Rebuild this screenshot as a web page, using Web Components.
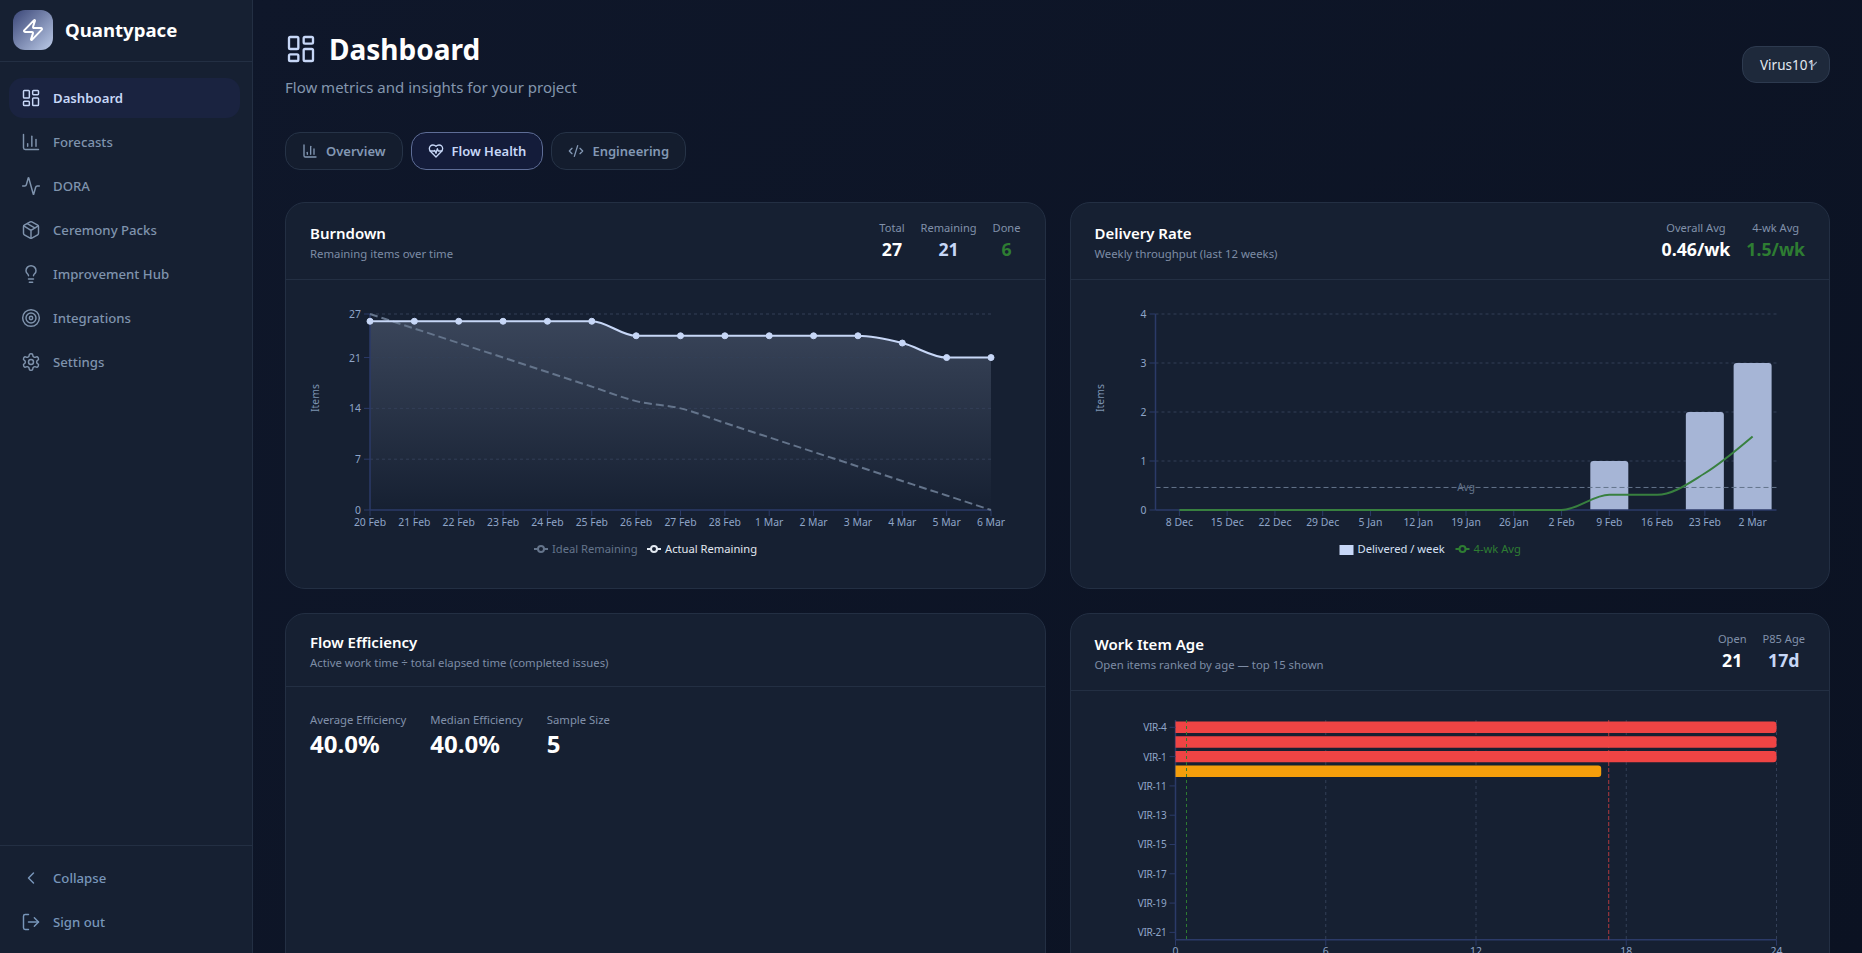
<!DOCTYPE html>
<html lang="en">
<head>
<meta charset="utf-8">
<title>Quantypace</title>
<style>
  html, body { margin: 0; height: 100%; background: #0e1628; }
  body { font-family: "Noto Sans", Inter, "Liberation Sans", sans-serif; overflow: hidden; }
</style>
</head>
<body>
<qp-app></qp-app>
<script>
const ICONS = {
  dashboard: '<rect x="3" y="3" width="7" height="9" rx="1"/><rect x="14" y="3" width="7" height="5" rx="1"/><rect x="14" y="12" width="7" height="9" rx="1"/><rect x="3" y="16" width="7" height="5" rx="1"/>',
  chart: '<path d="M3 3v16a2 2 0 0 0 2 2h16"/><path d="M18 17V9"/><path d="M13 17V5"/><path d="M8 17v-3"/>',
  activity: '<path d="M22 12h-2.48a2 2 0 0 0-1.93 1.46l-2.35 8.36a.25.25 0 0 1-.48 0L9.24 2.18a.25.25 0 0 0-.48 0l-2.35 8.36A2 2 0 0 1 4.49 12H2"/>',
  package: '<path d="M11 21.73a2 2 0 0 0 2 0l7-4A2 2 0 0 0 21 16V8a2 2 0 0 0-1-1.73l-7-4a2 2 0 0 0-2 0l-7 4A2 2 0 0 0 3 8v8a2 2 0 0 0 1 1.73z"/><path d="M12 22V12"/><path d="m3.3 7 7.703 4.734a2 2 0 0 0 1.994 0L20.7 7"/><path d="m7.5 4.27 9 5.15"/>',
  bulb: '<path d="M15 14c.2-1 .7-1.7 1.5-2.5 1-.9 1.5-2.2 1.5-3.5A6 6 0 0 0 6 8c0 1 .2 2.2 1.5 3.5.7.7 1.3 1.5 1.5 2.5"/><path d="M9 18h6"/><path d="M10 22h4"/>',
  target: '<circle cx="12" cy="12" r="10"/><circle cx="12" cy="12" r="6"/><circle cx="12" cy="12" r="2"/>',
  settings: '<path d="M12.22 2h-.44a2 2 0 0 0-2 2v.18a2 2 0 0 1-1 1.73l-.43.25a2 2 0 0 1-2 0l-.15-.08a2 2 0 0 0-2.73.73l-.22.38a2 2 0 0 0 .73 2.73l.15.1a2 2 0 0 1 1 1.72v.51a2 2 0 0 1-1 1.74l-.15.09a2 2 0 0 0-.73 2.73l.22.38a2 2 0 0 0 2.73.73l.15-.08a2 2 0 0 1 2 0l.43.25a2 2 0 0 1 1 1.73V20a2 2 0 0 0 2 2h.44a2 2 0 0 0 2-2v-.18a2 2 0 0 1 1-1.73l.43-.25a2 2 0 0 1 2 0l.15.08a2 2 0 0 0 2.73-.73l.22-.39a2 2 0 0 0-.73-2.73l-.15-.08a2 2 0 0 1-1-1.74v-.5a2 2 0 0 1 1-1.74l.15-.09a2 2 0 0 0 .73-2.73l-.22-.38a2 2 0 0 0-2.73-.73l-.15.08a2 2 0 0 1-2 0l-.43-.25a2 2 0 0 1-1-1.73V4a2 2 0 0 0-2-2z"/><circle cx="12" cy="12" r="3"/>',
  zap: '<path d="M4 14a1 1 0 0 1-.78-1.63l9.9-10.2a.5.5 0 0 1 .86.46l-1.92 6.02A1 1 0 0 0 13 10h7a1 1 0 0 1 .78 1.63l-9.9 10.2a.5.5 0 0 1-.86-.46l1.92-6.02A1 1 0 0 0 11 14z"/>',
  left: '<path d="m15 18-6-6 6-6"/>',
  logout: '<path d="m16 17 5-5-5-5"/><path d="M21 12H9"/><path d="M9 21H5a2 2 0 0 1-2-2V5a2 2 0 0 1 2-2h4"/>',
  heart: '<path d="M19 14c1.49-1.46 3-3.21 3-5.5A5.5 5.5 0 0 0 16.5 3c-1.76 0-3 .5-4.5 2-1.5-1.5-2.74-2-4.5-2A5.5 5.5 0 0 0 2 8.5c0 2.3 1.5 4.05 3 5.5l7 7Z"/><path d="M3.22 12H9.5l.5-1 2 4.5 2-7 1.5 3.5h5.27"/>',
  code: '<path d="m18 16 4-4-4-4"/><path d="m6 8-4 4 4 4"/><path d="m14.5 4-5 16"/>',
  down: '<path d="m6 9 6 6 6-6"/>'
};

function iconSvg(name, size, sw) {
  return `<svg xmlns="http://www.w3.org/2000/svg" width="${size}" height="${size}" viewBox="0 0 24 24" fill="none" stroke="currentColor" stroke-width="${sw || 2}" stroke-linecap="round" stroke-linejoin="round" style="display:block;flex:none">${ICONS[name]}</svg>`;
}

// same curve as d3 curveMonotoneX
function monotonePath(pts) {
  const n = pts.length, t = new Array(n).fill(0);
  const sign = v => (v < 0 ? -1 : 1);
  for (let i = 1; i < n - 1; i++) {
    const h0 = pts[i][0] - pts[i - 1][0], h1 = pts[i + 1][0] - pts[i][0];
    const s0 = (pts[i][1] - pts[i - 1][1]) / h0, s1 = (pts[i + 1][1] - pts[i][1]) / h1;
    const p = (s0 * h1 + s1 * h0) / (h0 + h1);
    t[i] = (sign(s0) + sign(s1)) * Math.min(Math.abs(s0), Math.abs(s1), 0.5 * Math.abs(p)) || 0;
  }
  const h = pts[1][0] - pts[0][0];
  t[0] = (3 * (pts[1][1] - pts[0][1]) / h - t[1]) / 2;
  t[n - 1] = (3 * (pts[n - 1][1] - pts[n - 2][1]) / h - t[n - 2]) / 2;
  let d = `M${pts[0][0]},${pts[0][1]}`;
  for (let i = 0; i < n - 1; i++) {
    const dx = (pts[i + 1][0] - pts[i][0]) / 3;
    d += `C${pts[i][0] + dx},${pts[i][1] + dx * t[i]} ${pts[i + 1][0] - dx},${pts[i + 1][1] - dx * t[i + 1]} ${pts[i + 1][0]},${pts[i + 1][1]}`;
  }
  return d;
}

const AXIS = '#2b3a68', GRID = '#333f57', TICK = '#8fa5c8';
const chartStyle = `
  :host { display: block; }
  svg.plot { display: block; width: 100%; height: 260px; overflow: visible; }
  text { font-family: "Noto Sans", Inter, "Liberation Sans", sans-serif; font-size: 10.4px; fill: ${TICK}; }
  .legend { font-size: 11.2px; }
  .name { font-size: 10px; letter-spacing: -.25px; }
`;

function yTicks(list, x0, x1, fn) {
  return list.map(v => {
    const y = fn(v);
    return `<line x1="${x0 - 6}" x2="${x0}" y1="${y}" y2="${y}" stroke="${AXIS}"/>
      <text x="${x0 - 9}" y="${y + 4}" text-anchor="end">${v}</text>`;
  }).join('');
}
function legendIcon(x, y, color) {
  return `<line x1="${x}" x2="${x + 14}" y1="${y}" y2="${y}" stroke="${color}" stroke-width="2"/>
    <circle cx="${x + 7}" cy="${y}" r="3" fill="#162032" stroke="${color}" stroke-width="2"/>`;
}

class QpIcon extends HTMLElement {
  connectedCallback() {
    const size = this.getAttribute('size') || 20;
    const root = this.attachShadow({ mode: 'open' });
    root.innerHTML = `<style>:host{display:block;flex:none;width:${size}px;height:${size}px}</style>${iconSvg(this.getAttribute('name'), size, this.getAttribute('sw'))}`;
  }
}

class QpNavItem extends HTMLElement {
  connectedCallback() {
    const root = this.attachShadow({ mode: 'open' });
    root.innerHTML = `
      <style>
        :host { display: flex; align-items: center; gap: 12px; height: 40px; padding: 0 12px; border-radius: 14px;
          font-size: 13.2px; font-weight: 500; color: #7f93ad; }
        :host([active]) { background: #1a2340; color: #c7d7f7; font-weight: 600; }
        :host([foot]) { color: #7896ba; }
        span { margin-bottom: 1px; }
      </style>
      <qp-icon name="${this.getAttribute('icon')}" size="20" sw="1.75"></qp-icon>
      <span><slot></slot></span>`;
  }
}

class QpSidebar extends HTMLElement {
  connectedCallback() {
    const root = this.attachShadow({ mode: 'open' });
    root.innerHTML = `
      <style>
        :host { display: flex; flex-direction: column; width: 252px; flex: none; height: 953px;
          background: #162032; border-right: 1px solid #232f43; }
        .brand { display: flex; align-items: center; gap: 12px; padding: 10px 13px 11px; border-bottom: 1px solid #232f43; }
        .logo { width: 40px; height: 40px; border-radius: 12px; display: flex; align-items: center; justify-content: center;
          color: #fff; background: linear-gradient(135deg, #3a4677, #bccbe8); }
        .name { font-size: 18.6px; font-weight: 700; color: #fff; margin-bottom: 2px; }
        nav { display: flex; flex-direction: column; gap: 4px; padding: 16px 12px 0 9px; }
        .foot { margin-top: auto; display: flex; flex-direction: column; gap: 4px; padding: 12px 12px 11px 9px; border-top: 1px solid #232f43; }
      </style>
      <div class="brand">
        <div class="logo"><qp-icon name="zap" size="24" sw="2"></qp-icon></div>
        <div class="name">Quantypace</div>
      </div>
      <nav>
        <qp-nav-item icon="dashboard" active>Dashboard</qp-nav-item>
        <qp-nav-item icon="chart">Forecasts</qp-nav-item>
        <qp-nav-item icon="activity">DORA</qp-nav-item>
        <qp-nav-item icon="package">Ceremony Packs</qp-nav-item>
        <qp-nav-item icon="bulb">Improvement Hub</qp-nav-item>
        <qp-nav-item icon="target">Integrations</qp-nav-item>
        <qp-nav-item icon="settings">Settings</qp-nav-item>
      </nav>
      <div class="foot">
        <qp-nav-item icon="left" foot>Collapse</qp-nav-item>
        <qp-nav-item icon="logout" foot>Sign out</qp-nav-item>
      </div>`;
  }
}

class QpTab extends HTMLElement {
  connectedCallback() {
    const root = this.attachShadow({ mode: 'open' });
    root.innerHTML = `
      <style>
        :host { display: flex; align-items: center; gap: 8px; height: 38px; box-sizing: border-box; padding: 0 16px;
          border: 1px solid #263347; border-radius: 15px; background: #141d2e; color: #8398b4; font-size: 13px; font-weight: 600; }
        :host([active]) { background: #141c3a; border-color: #5e6d96; color: #c7d7f7; }
        span { margin-bottom: 1px; }
      </style>
      <qp-icon name="${this.getAttribute('icon')}" size="16"></qp-icon>
      <span><slot></slot></span>`;
  }
}

class QpPageHead extends HTMLElement {
  connectedCallback() {
    const root = this.attachShadow({ mode: 'open' });
    root.innerHTML = `
      <style>
        :host { display: flex; justify-content: space-between; align-items: flex-start; }
        .row { display: flex; align-items: center; gap: 12px; color: #c7d7f7; }
        h1 { margin: 0; font-size: 28px; line-height: 40px; font-weight: 700; color: #fff; }
        p { margin: 7px 0 0; font-size: 15px; line-height: 22px; color: #8496ae; }
        .select { position: relative; box-sizing: border-box; width: 88px; height: 37px; margin-top: 17px; padding-left: 17px;
          display: flex; align-items: center; border: 1px solid #2d3a4f; border-radius: 14px; background: #1e293b;
          color: #e2e8f0; font-size: 13.5px; }
        .chev { position: absolute; right: 9px; top: 10px; color: #94a3b8; }
      </style>
      <div>
        <div class="row"><qp-icon name="dashboard" size="32" sw="1.75"></qp-icon><h1>Dashboard</h1></div>
        <p>Flow metrics and insights for your project</p>
      </div>
      <div class="select">Virus101<span class="chev">${iconSvg('down', 14)}</span></div>`;
  }
}

class QpStat extends HTMLElement {
  connectedCallback() {
    const root = this.attachShadow({ mode: 'open' });
    const big = this.hasAttribute('big');
    root.innerHTML = `
      <style>
        :host { display: block; text-align: ${big ? 'left' : 'center'}; }
        .l { font-size: ${big ? 11.3 : 11.1}px; line-height: ${big ? 18 : 16}px; color: #8191aa; margin: ${big ? '0' : '1px 0 -1px'}; }
        .v { font-size: ${big ? 24 : 17.7}px; line-height: ${big ? 32 : 28}px; font-weight: 700; color: ${this.getAttribute('color') || '#fff'}; margin: ${big ? '-1px 0 1px' : '0'}; }
      </style>
      <div class="l">${this.getAttribute('label')}</div>
      <div class="v"><slot></slot></div>`;
  }
}

class QpCard extends HTMLElement {
  connectedCallback() {
    const root = this.attachShadow({ mode: 'open' });
    root.innerHTML = `
      <style>
        :host { display: block; background: #162032; border: 1px solid #232f43; border-radius: 20px; }
        header { display: flex; justify-content: space-between; align-items: center; padding: 16px 24px; border-bottom: 1px solid #232f43; }
        .t { font-size: 15px; line-height: 24px; font-weight: 600; color: #fff; }
        .s { font-size: 11.35px; line-height: 16px; color: #7d8ca5; margin: 1px 0 -1px; }
        .stats { display: flex; gap: 16px; }
        .body { padding: 24px; }
      </style>
      <header>
        <div><div class="t">${this.getAttribute('title')}</div><div class="s">${this.getAttribute('sub')}</div></div>
        <div class="stats"><slot name="stats"></slot></div>
      </header>
      <div class="body"><slot></slot></div>`;
  }
}

class QpBurndown extends HTMLElement {
  connectedCallback() {
    const root = this.attachShadow({ mode: 'open' });
    const labels = ['20 Feb','21 Feb','22 Feb','23 Feb','24 Feb','25 Feb','26 Feb','27 Feb','28 Feb','1 Mar','2 Mar','3 Mar','4 Mar','5 Mar','6 Mar'];
    const actual = [26,26,26,26,26,26,24,24,24,24,24,24,23,21,21];
    const ideal = [27,25,23,21,19,17,15,14,12,10,8,6,4,2,0];
    const L = 60, R = 681, T = 10, B = 206;
    const X = i => L + i * (R - L) / 14, Y = v => B - v * (B - T) / 27;
    const act = monotonePath(actual.map((v, i) => [X(i), Y(v)]));
    const idl = monotonePath(ideal.map((v, i) => [X(i), Y(v)]));
    const ticks = [27, 21, 14, 7, 0];
    root.innerHTML = `
      <style>${chartStyle}</style>
      <svg class="plot">
        <defs><linearGradient id="fill" x1="0" y1="0" x2="0" y2="1">
          <stop offset="0" stop-color="#c7d7f7" stop-opacity=".2"/><stop offset="1" stop-color="#c7d7f7" stop-opacity="0"/>
        </linearGradient></defs>
        <path d="${act}L${R},${B}L${L},${B}Z" fill="url(#fill)"/>
        ${ticks.filter(v => v).map(v => `<line x1="${L}" x2="${R}" y1="${Y(v)}" y2="${Y(v)}" stroke="${GRID}" stroke-dasharray="3 3"/>`).join('')}
        <line x1="${L}" x2="${L}" y1="${T}" y2="${B}" stroke="${AXIS}" stroke-width="1.5"/>
        <line x1="${L}" x2="${R}" y1="${B}" y2="${B}" stroke="${AXIS}" stroke-width="1.5"/>
        ${yTicks(ticks, L, R, Y)}
        ${labels.map((t, i) => `<line x1="${X(i)}" x2="${X(i)}" y1="${B}" y2="${B + 6}" stroke="${AXIS}"/>
          <text x="${X(i)}" y="${B + 16}" text-anchor="middle">${t}</text>`).join('')}
        <text transform="translate(9,94) rotate(-90)" text-anchor="middle" style="fill:#7d92b0">Items</text>
        <path d="${idl}" fill="none" stroke="#64748b" stroke-width="2" stroke-dasharray="8 4"/>
        <path d="${act}" fill="none" stroke="#c7d7f7" stroke-width="2"/>
        ${actual.map((v, i) => `<circle cx="${X(i)}" cy="${Y(v)}" r="3" fill="#c7d7f7" stroke="#c7d7f7"/>`).join('')}
        ${legendIcon(224, 245, '#64748b')}
        <text class="legend" x="242" y="249" style="fill:#64748b">Ideal Remaining</text>
        ${legendIcon(337, 245, '#e2e8f0')}
        <text class="legend" x="355" y="249" style="fill:#e2e8f0">Actual Remaining</text>
      </svg>`;
  }
}

class QpDelivery extends HTMLElement {
  connectedCallback() {
    const root = this.attachShadow({ mode: 'open' });
    const labels = ['8 Dec','15 Dec','22 Dec','29 Dec','5 Jan','12 Jan','19 Jan','26 Jan','2 Feb','9 Feb','16 Feb','23 Feb','2 Mar'];
    const bars = [0,0,0,0,0,0,0,0,0,1,0,2,3];
    const avg4 = [0,0,0,0,0,0,0,0,0,0.31,0.31,0.75,1.5];
    const L = 60.5, R = 681.5, T = 10, B = 206;
    const band = (R - L) / 13;
    const X = i => L + band * (i + 0.5), Y = v => B - v * (B - T) / 4;
    const ticks = [4, 3, 2, 1, 0];
    root.innerHTML = `
      <style>${chartStyle}</style>
      <svg class="plot">
        ${ticks.filter(v => v).map(v => `<line x1="${L}" x2="${R}" y1="${Y(v)}" y2="${Y(v)}" stroke="${GRID}" stroke-dasharray="3 3"/>`).join('')}
        ${bars.map((v, i) => v ? `<path d="M${X(i) - 19},${B}V${Y(v) + 3}a3,3 0 0 1 3,-3H${X(i) + 16}a3,3 0 0 1 3,3V${B}Z" fill="#a6b5d6"/>` : '').join('')}
        <line x1="${L}" x2="${R}" y1="${Y(0.46)}" y2="${Y(0.46)}" stroke="#64748b" stroke-dasharray="5 3"/>
        <text x="${(L + R) / 2}" y="${Y(0.46) + 4}" text-anchor="middle" style="fill:#64748b;font-size:10px">Avg</text>
        <line x1="${L}" x2="${L}" y1="${T}" y2="${B}" stroke="${AXIS}" stroke-width="1.5"/>
        <line x1="${L}" x2="${R}" y1="${B}" y2="${B}" stroke="${AXIS}" stroke-width="1.5"/>
        ${yTicks(ticks, L, R, Y)}
        ${labels.map((t, i) => `<line x1="${X(i)}" x2="${X(i)}" y1="${B}" y2="${B + 6}" stroke="${AXIS}"/>
          <text x="${X(i)}" y="${B + 16}" text-anchor="middle">${t}</text>`).join('')}
        <text transform="translate(9,94) rotate(-90)" text-anchor="middle" style="fill:#7d92b0">Items</text>
        <path d="${monotonePath(avg4.map((v, i) => [X(i), Y(v)]))}" fill="none" stroke="#38803f" stroke-width="2"/>
        <rect x="244.5" y="241" width="14" height="10" fill="#c7d7f7"/>
        <text class="legend" x="262.5" y="249" style="fill:#d5e0f5">Delivered / week</text>
        ${legendIcon(360.5, 245, '#2e7d32')}
        <text class="legend" x="378.5" y="249" style="fill:#2e7d32">4-wk Avg</text>
      </svg>`;
  }
}

class QpAge extends HTMLElement {
  connectedCallback() {
    const root = this.attachShadow({ mode: 'open' });
    const L = 80.5, R = 681.5, T = 5, B = 224.7;
    const X = d => L + d * (R - L) / 24, row = (B - T) / 15;
    const Yc = i => T + row * (i + 0.5);
    const bars = [[24, '#ef4444'], [24, '#ef4444'], [24, '#ef4444'], [17, '#f59e0b']];
    const names = ['VIR-4','VIR-1','VIR-11','VIR-13','VIR-15','VIR-17','VIR-19','VIR-21'];
    root.innerHTML = `
      <style>${chartStyle}</style>
      <svg class="plot">
        ${[0,6,12,18,24].map(d => `<line x1="${X(d)}" x2="${X(d)}" y1="${T}" y2="${B}" stroke="${GRID}" stroke-dasharray="3 3"/>`).join('')}
        <line x1="${L}" x2="${L}" y1="${T}" y2="${B}" stroke="${AXIS}" stroke-width="1.5"/>
        <line x1="${L}" x2="${R}" y1="${B}" y2="${B}" stroke="${AXIS}" stroke-width="1.5"/>
        ${bars.map((b, i) => `<path d="M${L},${Yc(i) - 5.7}H${X(b[0]) - 3}a3,3 0 0 1 3,3V${Yc(i) + 2.7}a3,3 0 0 1 -3,3H${L}Z" fill="${b[1]}"/>`).join('')}
        <line x1="${X(0.44)}" x2="${X(0.44)}" y1="${T}" y2="${B}" stroke="#2e7d32" stroke-dasharray="3 3"/>
        <line x1="${X(17.3)}" x2="${X(17.3)}" y1="${T}" y2="${B}" stroke="#ef4444" stroke-opacity=".7" stroke-dasharray="4 2"/>
        ${names.map((n, i) => `<line x1="${L - 6}" x2="${L}" y1="${Yc(i * 2)}" y2="${Yc(i * 2)}" stroke="${AXIS}"/>
          <text class="name" x="${L - 9}" y="${Yc(i * 2) + 4}" text-anchor="end">${n}</text>`).join('')}
        ${[0,6,12,18,24].map(d => `<line x1="${X(d)}" x2="${X(d)}" y1="${B}" y2="${B + 6}" stroke="${AXIS}"/>
          <text x="${X(d)}" y="240" text-anchor="middle">${d}</text>`).join('')}
      </svg>`;
  }
}

class QpApp extends HTMLElement {
  connectedCallback() {
    const root = this.attachShadow({ mode: 'open' });
    root.innerHTML = `
      <style>
        :host { display: flex; height: 953px; overflow: hidden; }
        main { flex: 1; min-width: 0; box-sizing: border-box; padding: 29px 32px 0; overflow: hidden;
          background: linear-gradient(135deg, #0f172a, #0b1222); }
        .tabs { display: flex; gap: 8px; margin: 34px 0 32px; }
        .grid { display: grid; grid-template-columns: 1fr 1fr; gap: 24px; }
        .flow { display: flex; gap: 24px; }
      </style>
      <qp-sidebar></qp-sidebar>
      <main>
        <qp-page-head></qp-page-head>
        <div class="tabs">
          <qp-tab icon="chart">Overview</qp-tab>
          <qp-tab icon="heart" active>Flow Health</qp-tab>
          <qp-tab icon="code">Engineering</qp-tab>
        </div>
        <div class="grid">
          <qp-card title="Burndown" sub="Remaining items over time">
            <qp-stat slot="stats" label="Total">27</qp-stat>
            <qp-stat slot="stats" label="Remaining" color="#c7d7f7">21</qp-stat>
            <qp-stat slot="stats" label="Done" color="#2e7d32">6</qp-stat>
            <qp-burndown></qp-burndown>
          </qp-card>
          <qp-card title="Delivery Rate" sub="Weekly throughput (last 12 weeks)">
            <qp-stat slot="stats" label="Overall Avg">0.46/wk</qp-stat>
            <qp-stat slot="stats" label="4-wk Avg" color="#2e7d32">1.5/wk</qp-stat>
            <qp-delivery></qp-delivery>
          </qp-card>
          <qp-card title="Flow Efficiency" sub="Active work time ÷ total elapsed time (completed issues)">
            <div class="flow">
              <qp-stat big label="Average Efficiency">40.0%</qp-stat>
              <qp-stat big label="Median Efficiency">40.0%</qp-stat>
              <qp-stat big label="Sample Size">5</qp-stat>
            </div>
          </qp-card>
          <qp-card title="Work Item Age" sub="Open items ranked by age — top 15 shown">
            <qp-stat slot="stats" label="Open">21</qp-stat>
            <qp-stat slot="stats" label="P85 Age" color="#c7d7f7">17d</qp-stat>
            <qp-age></qp-age>
          </qp-card>
        </div>
      </main>`;
  }
}

customElements.define('qp-icon', QpIcon);
customElements.define('qp-nav-item', QpNavItem);
customElements.define('qp-sidebar', QpSidebar);
customElements.define('qp-tab', QpTab);
customElements.define('qp-page-head', QpPageHead);
customElements.define('qp-stat', QpStat);
customElements.define('qp-card', QpCard);
customElements.define('qp-burndown', QpBurndown);
customElements.define('qp-delivery', QpDelivery);
customElements.define('qp-age', QpAge);
customElements.define('qp-app', QpApp);
</script>
</body>
</html>
